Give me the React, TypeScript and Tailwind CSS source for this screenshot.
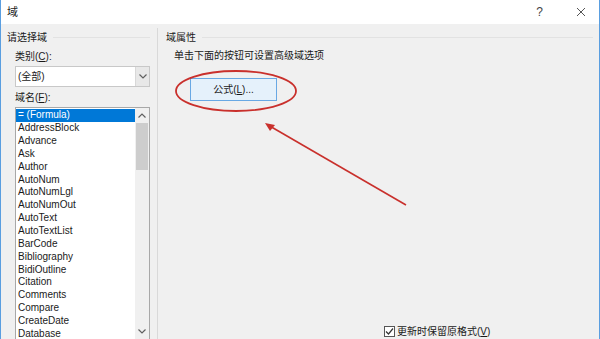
import React from "react";

const items = [
  "AddressBlock",
  "Advance",
  "Ask",
  "Author",
  "AutoNum",
  "AutoNumLgl",
  "AutoNumOut",
  "AutoText",
  "AutoTextList",
  "BarCode",
  "Bibliography",
  "BidiOutline",
  "Citation",
  "Comments",
  "Compare",
  "CreateDate",
  "Database",
];

const font = {
  fontFamily: '"Liberation Sans", "Noto Sans CJK SC", sans-serif',
};

function Chevron({ up = false }: { up?: boolean }) {
  return (
    <svg width="8" height="5" viewBox="0 0 8 5" className="block">
      <path
        d={up ? "M0.5 4.5 L4 1 L7.5 4.5" : "M0.5 0.5 L4 4 L7.5 0.5"}
        fill="none"
        stroke="#606060"
        strokeWidth="1.2"
      />
    </svg>
  );
}

export default function App() {
  return (
    <div
      className="relative w-[600px] h-[339px] overflow-hidden bg-[#f0f0f0] border-l border-r border-[#5a9ee0] text-[10px] text-[#1a1a1a] flex flex-col"
      style={font}
    >
      {/* title bar */}
      <div className="h-[24px] bg-white flex items-center shrink-0">
        <span className="ml-[6px] text-[11px]">域</span>
        <div className="flex-1" />
        <span className="text-[12px] text-[#444] mr-[33px]">?</span>
        <svg width="10" height="10" viewBox="0 0 10 10" className="mr-[13px]">
          <path d="M1 1 L9 9 M9 1 L1 9" stroke="#555" strokeWidth="1" />
        </svg>
      </div>

      {/* body */}
      <div className="flex flex-1 min-h-0">
        {/* left panel */}
        <div className="w-[156px] shrink-0 flex flex-col pt-[6px]">
          <div className="flex items-center h-[14px] pl-[6px]">
            <span>请选择域</span>
            <div className="flex-1 h-px bg-[#e2e2e2] ml-[6px] mr-[7px]" />
          </div>
          <div className="pl-[14px] mt-[6px] h-[13px] flex items-center">类别(<u>C</u>):</div>
          <div className="ml-[14px] mt-[3px] w-[135px] h-[21px] border border-[#c8c8c8] bg-white flex">
            <div className="flex-1 flex items-center pl-[2px]">(全部)</div>
            <div className="w-[14px] bg-[#e8e8e8] border-l border-[#d8d8d8] flex items-center justify-center">
              <Chevron />
            </div>
          </div>
          <div className="pl-[14px] mt-[4px] h-[13px] flex items-center">域名(<u>F</u>):</div>
          <div className="ml-[14px] mt-[3px] w-[135px] flex-1 border border-[#a8a8a8] border-b-0 bg-white flex min-h-0">
            <div className="flex-1 pt-[1px] overflow-hidden">
              <div className="h-[12.85px] bg-[#0078d7] text-white flex items-center pl-[2px] leading-none">
                = (Formula)
              </div>
              {items.map((t) => (
                <div key={t} className="h-[12.85px] flex items-center pl-[2px] leading-none">
                  {t}
                </div>
              ))}
            </div>
            <div className="w-[14px] bg-[#f0f0f0] flex flex-col items-center">
              <div className="h-[15px] flex items-center justify-center">
                <Chevron up />
              </div>
              <div className="w-[12px] h-[47px] bg-[#cdcdcd]" />
              <div className="flex-1" />
              <div className="h-[14px] flex items-start justify-center pt-[4px]">
                <Chevron />
              </div>
            </div>
          </div>
        </div>

        {/* separator */}
        <div className="w-px bg-[#d9d9d9] mt-[4px]" />

        {/* right panel */}
        <div className="flex-1 flex flex-col pt-[6px]">
          <div className="flex items-center h-[14px] pl-[8px]">
            <span>域属性</span>
            <div className="flex-1 h-px bg-[#e2e2e2] ml-[6px] mr-[6px]" />
          </div>
          <div className="pl-[16px] mt-[5px] h-[13px] flex items-center">单击下面的按钮可设置高级域选项</div>
          <div className="ml-[32px] mt-[16px] w-[87px] h-[23px] bg-[#e5f1fb] border border-[#68a8e4] flex items-center justify-center">
            公式(<u>L</u>)...
          </div>
          <div className="flex-1" />
          <div className="flex items-center pl-[226px] mb-[2px] h-[12px]">
            <div className="w-[11px] h-[11px] border border-[#555] bg-white flex items-center justify-center">
              <svg width="9" height="9" viewBox="0 0 9 9">
                <path d="M1 4.5 L3.5 7 L8 1.5" fill="none" stroke="#333" strokeWidth="1.2" />
              </svg>
            </div>
            <span className="ml-[2px]">更新时保留原格式(<u>V</u>)</span>
          </div>
        </div>
      </div>

      {/* annotation overlay */}
      <svg
        className="absolute left-0 top-0 pointer-events-none"
        width="600"
        height="339"
        viewBox="0 0 600 339"
      >
        <ellipse cx="235" cy="91" rx="60" ry="20" fill="none" stroke="#c9302c" strokeWidth="1.8" />
        <line x1="405" y1="205" x2="267" y2="125" stroke="#c9302c" strokeWidth="1.6" />
        <path d="M264 123 L274 125 L269 131 Z" fill="#c9302c" />
      </svg>
    </div>
  );
}
